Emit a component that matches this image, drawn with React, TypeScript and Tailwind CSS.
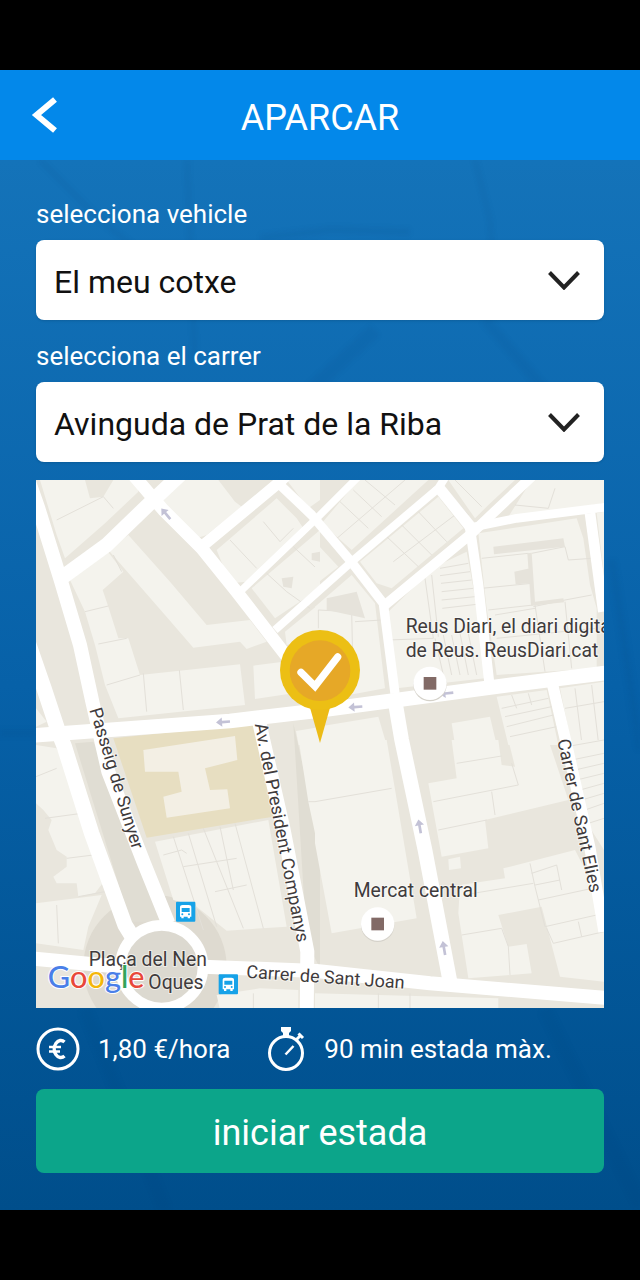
import { useState, type ReactNode } from 'react';

interface SelectFieldProps {
  id: string;
  label: string;
  options: string[];
}

function SelectField({ id, label, options }: SelectFieldProps) {
  const [value, setValue] = useState(options[0]);

  return (
    <div className="flex flex-col gap-2">
      <label htmlFor={id} className="text-[26px] leading-9">
        {label}
      </label>
      <div className="relative">
        <select
          id={id}
          value={value}
          onChange={(e) => setValue(e.target.value)}
          className="block h-20 w-full appearance-none rounded-lg bg-white pt-[3px] pr-16 pl-[18px] text-[32px] text-[#111] shadow-sm"
        >
          {options.map((option) => (
            <option key={option}>{option}</option>
          ))}
        </select>
        <svg
          viewBox="0 0 32 20"
          className="pointer-events-none absolute inset-y-0 right-6 my-auto h-5 w-8"
          fill="none"
          stroke="#222"
          strokeWidth="4"
        >
          <path d="M1.500 2.500 16 17.500 30.500 2.500" />
        </svg>
      </div>
    </div>
  );
}

// Faint street pattern behind the form
function Backdrop() {
  return (
    <svg
      viewBox="0 0 640 1050"
      preserveAspectRatio="xMidYMin slice"
      className="absolute inset-0 h-full w-full blur-[2px]"
      fill="none"
      stroke="#00396f"
      strokeOpacity=".07"
      strokeWidth="5"
      aria-hidden="true"
    >
      <path d="M40 0 100 60 190 130" />
      <path d="M187 0 195 200" />
      <path d="M475 0 490 60 495 130" />
      <path d="M260 78 330 70 410 72" strokeWidth="8" />
      <path d="M300 240 375 170" strokeWidth="14" />
      <path d="M485 160 545 230 600 280" strokeWidth="10" />
      <path d="M0 573h36M612 400l28 190" strokeWidth="8" />
      <path d="M85 850 165 1050M545 850 640 1045" strokeWidth="12" />
    </svg>
  );
}

type Group = { x: number; y: number; shapes: string; lines: string };

// Building footprints, one entry per quarter of the map
const buildings: Group[] = [
  {
    x: 0,
    y: 0,
    shapes:
      'M30 15H165L180 70 220 65 250 15H320L325 50 225 145 105 250 80 180Z ' +
      'M390 75 450 15H565L615 80 635 95 530 180 500 190Z ' +
      'M235 225 295 180 420 320 530 450 660 435 710 500 650 522 630 500 490 518 405 420Z ' +
      'M120 315 235 232 280 290 218 345 235 395 265 490 295 490 330 600 630 568 645 690 265 730 225 630 195 510 165 410Z ' +
      'M670 572 760 560 790 655 675 672Z ' +
      'M560 225 740 70 800 130 820 160 650 320 600 325Z ' +
      'M665 340 870 165V340L735 430Z M765 470 870 385V480L770 510Z M770 15H870V75L835 100Z ' +
      'M18 700 50 740 18 755Z M798 768 870 756V810H806Z',
    lines:
      'M80 135 220 65 250 100M250 240 275 290M165 410 235 393M205 507 290 490M230 630 330 600M340 595 350 710M448 585 460 705M600 195 680 280M700 140 750 200 790 160M710 295 770 350 840 400M790 215 870 290',
  },
  {
    x: 855,
    y: 0,
    shapes:
      'M130 15H340L110 225 20 145Z M135 260 370 65 445 160 230 340 185 325Z M400 15H600L520 90 480 130Z ' +
      'M650 15H867V85L580 125Z M0 200 70 275 0 330Z M0 395 110 300 180 385 210 640 130 655 0 675Z ' +
      'M220 410 360 275 455 230 490 420 510 610 245 640Z ' +
      'M490 175 785 130 805 190 825 330 845 400V580L545 600 515 400Z ' +
      'M845 115 867 110V300Z ' +
      'M545 665 695 645 730 810H580Z M735 640 867 620V810H770Z M0 757 190 725 215 810H0Z M410 745 525 725 545 810H420Z',
    lines:
      'M60 195 270 15M75 80 160 160M115 45 200 125M150 15 240 90M210 180 310 275M235 260 420 120M260 150 350 240M310 110 395 200M380 30 460 120M420 15 500 95M600 90 700 100 720 40M10 460V405L110 410 115 640M120 440 200 435M330 310 355 490 220 495M350 300 370 485M375 280 460 265M375 302 465 290M378 325 470 315M380 350 475 340M380 375 480 365M382 400 485 388M360 490 385 600M385 480 410 600M410 480 435 600M435 475 460 600M460 475 485 600M500 250 640 235 655 390 520 405M500 340 650 325M650 235 750 215 760 255 830 250M655 395 750 375 830 360M660 390 690 590M750 380 770 580M540 420 660 400M545 490 840 460M560 700 700 670M570 725 710 695M575 755 715 720M585 785 725 755M590 660 605 700M640 655 650 690M780 640 800 800M830 630 850 800M750 700 867 680',
  },
  {
    x: 0,
    y: 795,
    shapes:
      'M18 15 80 25 165 200 225 420 195 460 145 470 140 430 80 430 70 410 110 380V350L80 330 55 270 65 240 40 210 18 190Z ' +
      'M18 490 215 465 175 560 160 630 18 610Z ' +
      'M375 305 715 240 770 560 590 572 500 500 430 480Z M560 765 690 745 805 750V810H570Z ' +
      'M806 0H870V350L835 185Z',
    lines:
      'M18 110 80 85M45 235 155 220M110 355 190 345M80 495 85 610M145 470 225 455M400 345 455 330 470 340M430 290 520 570M475 280 560 560M520 265 640 565M570 260 610 450M615 250 700 565M460 380 620 355M555 455 650 435M835 185H870M670 760V810',
  },
  {
    x: 855,
    y: 795,
    shapes:
      'M0 0 215 0 305 535 50 580 0 310Z M410 0H550L560 75 600 80 580 0H700L760 180 510 240 520 325 380 350 340 130 425 115Z ' +
      'M400 358 435 350 438 385 402 390Z M435 435 570 415 565 385 780 330 867 500V725L735 710 680 500 550 525 580 620 635 612 650 700 460 715 430 520Z ' +
      'M755 0H867V330L810 240Z M0 760 550 775V810H0Z',
    lines:
      'M0 185 230 145M425 70 560 48M355 185 610 135 590 70M530 155 540 225M370 270 515 240M445 465 655 430M670 480 855 440M645 370 660 440 690 560 867 520M650 400 725 375 740 450M440 585 560 565 580 620 585 705M660 435 735 420M695 565 715 610 867 575M790 545 800 590M190 760V810M285 760V810M755 20 867 0M770 60 867 40M780 90 867 70M785 120 867 100M795 150 867 130M800 180 867 160M810 210 867 190M820 250 867 235',
  },
];

const roads: [number, string][] = [
  [42, 'M-10 0 25 100 92 315 150 510 187 680 235 890 342 1165 415 1345'],
  [46, 'M-10 490 42 640 85 770 103 815 185 1075 285 1350 310 1390'],
  [44, 'M0 782 110 774 600 738 855 708 1085 677 1375 638 1740 592'],
  [38, 'M310 0 400 105 515 220 620 350 790 570'],
  [44, 'M90 312 230 210 380 65 450 0'],
  [34, 'M515 215 750 20 770 0'],
  [28, 'M745 25 845 120 965 262 1060 385 1095 655'],
  [44, 'M1092 660 1115 795 1185 1125 1260 1520'],
  [22, 'M625 355 860 130 990 0'],
  [24, 'M735 465 965 260 1225 40 1250 0'],
  [30, 'M1065 390 1325 175 1510 0'],
  [34, 'M1220 30 1325 160'],
  [26, 'M1320 158 1460 130 1740 95'],
  [30, 'M1320 160 1345 330 1378 625'],
  [32, 'M1680 115 1720 410'],
  [34, 'M1568 630 1610 810 1680 1120 1722 1370'],
  [42, 'M0 1450 270 1475M520 1475 860 1488 1200 1525 1740 1570'],
  [42, 'M685 730 760 1060 832 1430 830 1620'],
];

function Building({ x, y, shapes, lines }: Group) {
  return (
    <g transform={`translate(${x} ${y})`}>
      <path d={shapes} fill="#f4f3ed" />
      <path d={lines} fill="none" stroke="#e3e0d9" strokeWidth="3" />
    </g>
  );
}

function Arrow({ x, y, angle }: { x: number; y: number; angle: number }) {
  return (
    <path
      transform={`translate(${x} ${y}) rotate(${angle})`}
      d="M-22 0-4-14V-4H20V4H-4V14Z"
      fill="#c3c2d6"
    />
  );
}

function BusStop({ x, y }: { x: number; y: number }) {
  return (
    <g transform={`translate(${x} ${y})`}>
      <rect width="58" height="60" rx="3" fill="#16a2e8" />
      <path
        d="M12 17q0-7 8-7h18q8 0 8 7v28h-4v5h-7v-5H23v5h-7v-5h-4ZM17 19v12h24V19Z"
        fill="#fff"
        fillRule="evenodd"
      />
      <circle cx="19" cy="38" r="3" fill="#16a2e8" />
      <circle cx="39" cy="38" r="3" fill="#16a2e8" />
    </g>
  );
}

function Place({ x, y }: { x: number; y: number }) {
  return (
    <g transform={`translate(${x} ${y})`}>
      <circle cy="4" r="50" fill="#d5d2ca" />
      <circle r="50" fill="#fff" />
      <rect x="-19" y="-19" width="38" height="38" fill="#826a66" />
    </g>
  );
}

function StreetLabel({ x, y, angle, children }: { x: number; y: number; angle: number; children: ReactNode }) {
  return (
    <text transform={`translate(${x} ${y}) rotate(${angle})`} className="text-[54px]">
      {children}
    </text>
  );
}

// Map units are thirds of a pixel at the default width
function StreetMap() {
  return (
    <svg
      viewBox="18 15 1704 1584"
      className="block h-auto w-full bg-[#e9e6dd]"
      role="img"
      aria-label="Mapa"
    >
      <circle cx="375" cy="1475" r="215" fill="#dedad0" />
      <path d="M135 805 190 800 400 1260 440 1340 300 1340ZM790 745 870 1100V1480L830 1400Z" fill="#e0ddd3" />
      {buildings.map((group) => (
        <Building key={`${group.x}-${group.y}`} {...group} />
      ))}
      <path
        d="M1390 215 1600 190 1605 215 1392 238ZM1453 290 1500 280 1503 325 1457 328ZM1492 235 1505 233 1515 380 1600 370 1602 382 1503 392ZM890 370 980 350 1005 430 890 405ZM755 310 790 305 785 340 760 335ZM845 235 870 230V260L845 255Z"
        fill="#e6e3db"
      />
      <path d="M250 790 685 745 730 1025 350 1088Z" fill="#e7dec1" />
      <path
        d="M340 825 615 783 622 855 525 880 540 945 592 943 600 1000 410 1028 400 965 455 950 445 890 345 890Z"
        fill="#f3efe4"
      />

      <g fill="none" stroke="#fff" strokeLinejoin="round">
        {roads.map(([width, d]) => (
          <path key={d} d={d} strokeWidth={width} />
        ))}
      </g>
      <circle cx="395" cy="1475" r="124" fill="#dcd9d0" stroke="#fff" strokeWidth="32" />

      <Arrow x={408} y={117} angle={50} />
      <Arrow x={580} y={741} angle={-4} />
      <Arrow x={977} y={696} angle={-4} />
      <Arrow x={1250} y={655} angle={-6} />
      <Arrow x={1169} y={1055} angle={80} />
      <Arrow x={1242} y={1420} angle={80} />

      <BusStop x={438} y={1280} />
      <BusStop x={566} y={1498} />
      <Place x={1200} y={625} />
      <Place x={1043} y={1347} />

      <g fill="#3f3b3c" stroke="#fff" strokeWidth="6" strokeOpacity=".5" paintOrder="stroke" className="text-[58px]">
        <text x="1127" y="475">Reus Diari, el diari digita</text>
        <text x="1127" y="545">de Reus. ReusDiari.cat</text>
        <text x="971" y="1266">Mercat central</text>
        <text x="176" y="1473">Plaça del Nen</text>
        <text x="355" y="1543">Oques</text>
        <StreetLabel x={178} y={704} angle={73}>Passeig de Sunyer</StreetLabel>
        <StreetLabel x={674} y={748} angle={79}>Av. del President Companys</StreetLabel>
        <StreetLabel x={1582} y={796} angle={78}>Carrer de Sant Elies</StreetLabel>
        <StreetLabel x={648} y={1508} angle={4}>Carrer de Sant Joan</StreetLabel>
      </g>

      <text
        x="53"
        y="1540"
        stroke="#fff"
        strokeWidth="6"
        paintOrder="stroke"
        className="font-['Lato',sans-serif] text-[92px] font-medium"
      >
        <tspan fill="#4a7fe8">G</tspan>
        <tspan fill="#e8483a">o</tspan>
        <tspan fill="#f4b70a">o</tspan>
        <tspan fill="#4a7fe8">g</tspan>
        <tspan fill="#33a45a">l</tspan>
        <tspan fill="#e8483a">e</tspan>
      </text>

      <path d="M835 680 870 804 905 680Z" fill="#ecbb16" />
      <circle cx="870" cy="585" r="120" fill="#ecbf14" />
      <circle cx="870" cy="587" r="91" fill="#e6a827" />
      <path d="M813 592 855 634 923 546" fill="none" stroke="#fff" strokeWidth="22" strokeLinecap="round" />
    </svg>
  );
}

function EuroIcon() {
  return (
    <svg viewBox="0 0 44 44" className="size-11" fill="none" stroke="currentColor">
      <circle cx="22" cy="22" r="20" strokeWidth="3" />
      <path d="M28.500 15a6.500 8.500 0 1 0 0 14" strokeWidth="3.500" />
      <path d="M13 20h12M13 24.500h11" strokeWidth="2.500" />
    </svg>
  );
}

function StopwatchIcon() {
  return (
    <svg viewBox="0 0 40 44" className="h-11 w-10" fill="none" stroke="currentColor">
      <circle cx="20" cy="26" r="16.500" strokeWidth="3" />
      <path d="M15 0h10v4l-2 2v4h-6V6l-2-2Z" fill="currentColor" stroke="none" />
      <path d="m30 13 4-4" strokeWidth="3" />
      <path d="m32.500 6.500 4.500 4.500" strokeWidth="3" />
      <path d="m19.500 27.500 8-8.500" strokeWidth="2.500" />
    </svg>
  );
}

export default function App() {
  return (
    <div className="flex min-h-screen flex-col bg-black py-[70px] font-['Roboto',sans-serif] text-white">
      <header className="grid h-[90px] grid-cols-[64px_1fr_64px] items-center bg-[#0388ea]">
        <button type="button" aria-label="Enrere" className="flex h-full items-center justify-end pr-[6px]">
          <svg viewBox="0 0 28 36" className="h-9 w-7" fill="none" stroke="currentColor" strokeWidth="6">
            <path d="M25 2.500 6.500 18 25 33.500" />
          </svg>
        </button>
        <h1 className="pt-[5px] text-center text-[36px] leading-10">APARCAR</h1>
      </header>

      <main className="relative flex-1 overflow-hidden bg-linear-to-b from-[#1473b9] via-[#0761a8] to-[#004e8b]">
        <Backdrop />
        <form className="relative flex flex-col gap-[18px] px-9 pt-9 pb-9" onSubmit={(e) => e.preventDefault()}>
          <SelectField id="vehicle" label="selecciona vehicle" options={['El meu cotxe']} />
          <SelectField id="carrer" label="selecciona el carrer" options={['Avinguda de Prat de la Riba']} />
          <StreetMap />
          <div className="flex items-center gap-9 pt-px text-[26px] leading-11">
            <p className="flex items-center gap-[18px]">
              <EuroIcon />
              1,80 €/hora
            </p>
            <p className="flex items-center gap-[18px]">
              <StopwatchIcon />
              90 min estada màx.
            </p>
          </div>
          <button type="submit" className="h-[84px] rounded-lg bg-[#0ca58a] pt-1 text-[36px]">
            iniciar estada
          </button>
        </form>
      </main>
    </div>
  );
}
